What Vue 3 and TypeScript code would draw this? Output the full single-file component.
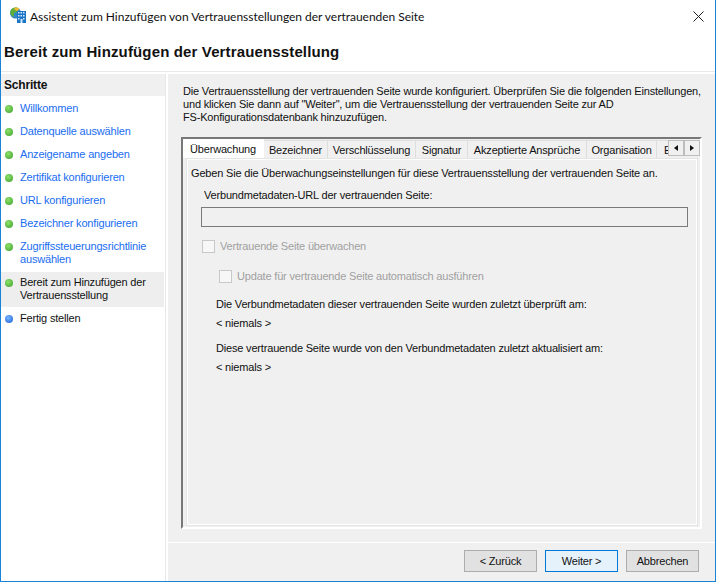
<script setup lang="ts">
interface Step { label: string; state: 'done' | 'current' | 'next' }
const steps: Step[] = [
  { label: 'Willkommen', state: 'done' },
  { label: 'Datenquelle auswählen', state: 'done' },
  { label: 'Anzeigename angeben', state: 'done' },
  { label: 'Zertifikat konfigurieren', state: 'done' },
  { label: 'URL konfigurieren', state: 'done' },
  { label: 'Bezeichner konfigurieren', state: 'done' },
  { label: 'Zugriffssteuerungsrichtlinie auswählen', state: 'done' },
  { label: 'Bereit zum Hinzufügen der Vertrauensstellung', state: 'current' },
  { label: 'Fertig stellen', state: 'next' },
]
const tabs = [
  { label: 'Bezeichner', w: 64, clip: false },
  { label: 'Verschlüsselung', w: 88, clip: false },
  { label: 'Signatur', w: 52, clip: false },
  { label: 'Akzeptierte Ansprüche', w: 119, clip: false },
  { label: 'Organisation', w: 70, clip: false },
  { label: 'Endpunkte', w: 70, clip: true },
]
</script>

<template>
  <div class="window">
    <div class="titlebar">
      <svg class="appicon" width="18" height="18" viewBox="0 0 18 18">
        <circle cx="6.500" cy="7" r="5.500" fill="#2f86c8" />
        <path d="M2 4C4 1.500 7 1 9 2L8.500 6 5 7 5 11 2.500 9.500 1 7z" fill="#5fae3a" />
        <path d="M5 1.700c2-.6 4-.2 5.500 1L8.500 5 6 4z" fill="#f2b92e" />
        <rect x="8" y="5" width="9" height="12" fill="#1c74c4" />
        <path d="M9 6h1.500v1.500H9zM11.500 6H13v1.500h-1.500zM14 6h1.500v1.500H14zM9 9h1.500v1.500H9zM11.500 9H13v1.500h-1.500zM14 9h1.500v1.500H14zM9 12h1.500v1.500H9zM14 12h1.500v1.500H14z" fill="#cfe8fb" />
        <rect x="11.500" y="13" width="2" height="4" fill="#cfe8fb" />
      </svg>
      <span class="title">Assistent zum Hinzufügen von Vertrauensstellungen der vertrauenden Seite</span>
      <svg class="close" width="11" height="11" viewBox="0 0 11 11">
        <path d="M.5.500l10 10M10.500.500l-10 10" stroke="#222" fill="none" />
      </svg>
    </div>
    <div class="heading">Bereit zum Hinzufügen der Vertrauensstellung</div>
    <div class="body">
      <aside class="sidebar">
        <div class="sidehead">Schritte</div>
        <ul class="steps">
          <li v-for="s in steps" :key="s.label" class="step" :class="s.state">
            <span class="dot"></span>
            <span class="steplabel">{{ s.label }}</span>
          </li>
        </ul>
      </aside>
      <main class="main">
        <div class="content">
          <p class="intro">Die Vertrauensstellung der vertrauenden Seite wurde konfiguriert. Überprüfen Sie die folgenden Einstellungen,<br />und klicken Sie dann auf "Weiter", um die Vertrauensstellung der vertrauenden Seite zur AD<br />FS-Konfigurationsdatenbank hinzuzufügen.</p>
          <div class="frame">
            <div class="tabstrip">
              <div class="tab active">Überwachung</div>
              <div v-for="t in tabs" :key="t.label" class="tab" :class="{ clip: t.clip }" :style="{ width: t.w + 'px' }">{{ t.label }}</div>
              <div class="scroller">
                <button class="arrow"><span class="tri left"></span></button>
                <button class="arrow"><span class="tri right"></span></button>
              </div>
            </div>
            <div class="page">
              <div class="lead">Geben Sie die Überwachungseinstellungen für diese Vertrauensstellung der vertrauenden Seite an.</div>
              <div class="urllabel">Verbundmetadaten-URL der vertrauenden Seite:</div>
              <div class="urlbox"></div>
              <label class="check first"><span class="box"></span>Vertrauende Seite überwachen</label>
              <label class="check second"><span class="box"></span>Update für vertrauende Seite automatisch ausführen</label>
              <div class="info a">Die Verbundmetadaten dieser vertrauenden Seite wurden zuletzt überprüft am:</div>
              <div class="info v">&lt; niemals &gt;</div>
              <div class="info b">Diese vertrauende Seite wurde von den Verbundmetadaten zuletzt aktualisiert am:</div>
              <div class="info v">&lt; niemals &gt;</div>
            </div>
          </div>
        </div>
        <div class="footer">
          <button class="btn">&lt; Zurück</button>
          <button class="btn primary">Weiter &gt;</button>
          <button class="btn">Abbrechen</button>
        </div>
      </main>
    </div>
  </div>
</template>

<style>
html, body { margin: 0; background: #fff; }
</style>

<style scoped>
.window {
  box-sizing: border-box;
  width: 716px;
  height: 582px;
  border: 1px solid #1883d7;
  border-top: 0;
  background: #fff;
  display: flex;
  flex-direction: column;
  font-family: "Liberation Sans", Arial, sans-serif;
  font-size: 11px;
  letter-spacing: -0.18px;
  color: #111;
  overflow: hidden;
}
.titlebar {
  height: 32px;
  display: flex;
  align-items: center;
  padding-left: 8px;
  flex: none;
}
.appicon { margin: 0 3px 2px 0; }
.title { flex: 1; font-family: Lato, sans-serif; font-size: 12px; letter-spacing: -0.03px; }
.close { margin-right: 11px; }
.heading {
  height: 40px;
  box-sizing: border-box;
  padding: 11px 0 0 3px;
  font-size: 15px;
  font-weight: 700;
  letter-spacing: 0.14px;
  flex: none;
  border-bottom: 1px solid #e8e8e8;
}
.body { flex: 1; display: flex; min-height: 0; padding-top: 2px; }
.sidebar { width: 164px; flex: none; border-right: 1px solid #e8e8e8; }
.sidehead {
  height: 22px;
  line-height: 22px;
  font-weight: 700;
  font-size: 12px;
  padding-left: 3px;
  background: #f0f0f0;
}
.steps { list-style: none; margin: 2px 0 0; padding: 0; }
.step {
  display: flex;
  padding: 4px 0 4px 4px;
  line-height: 13px;
  width: 163px;
  box-sizing: border-box;
  margin-bottom: 2px;
  color: #1a6df0;
}
.step.current { background: #eeeeee; color: #111; padding-bottom: 5px; margin-bottom: 1px; }
.step.next { color: #111; }
.steplabel { flex: 1; line-height: 13px; }
.dot {
  width: 8px;
  height: 8px;
  border-radius: 50%;
  margin: 3px 7px 0 0;
  flex: none;
  background: radial-gradient(circle at 40% 35%, #8fe06a, #3aa02c);
}
.step.next .dot { background: radial-gradient(circle at 40% 35%, #7ab6ff, #1a5fd8); }
.main {
  flex: 1;
  margin-left: 2px;
  background: #f0f0f0;
  display: flex;
  flex-direction: column;
  min-width: 0;
}
.content { flex: 1; padding: 11px 0 0 13px; display: flex; flex-direction: column; min-height: 0; }
.intro { margin: 0 0 13px 2px; line-height: 13px; white-space: nowrap; }
.frame {
  width: 521px;
  height: 392px;
  box-sizing: border-box;
  border: 2px solid #fff;
  border-top-color: #787878;
  border-left-color: #787878;
  display: flex;
  flex-direction: column;
}
.tabstrip { display: flex; height: 19px; position: relative; overflow: hidden; flex: none; align-items: flex-end; }
.tab {
  box-sizing: border-box;
  height: 18px;
  line-height: 19px;
  text-align: center;
  border: 1px solid #dedede;
  border-left: 0;
  border-bottom: 0;
  flex: none;
  white-space: nowrap;
  overflow: hidden;
}
.tab.active { width: 81px; height: 19px; background: #fff; border-color: #fff; line-height: 18px; }
.tab.clip { text-align: left; padding-left: 7px; }
.scroller { position: absolute; right: 0; top: 1px; display: flex; width: 32px; height: 16px; background: #f0f0f0; }
.arrow {
  flex: 1;
  padding: 0;
  background: #f0f0f0;
  border: 1px solid #bdbdbd;
  display: flex;
  align-items: center;
  justify-content: center;
}
.tri { width: 0; height: 0; border-top: 3px solid transparent; border-bottom: 3px solid transparent; }
.tri.left { border-right: 4px solid #111; }
.tri.right { border-left: 4px solid #111; }
.page {
  flex: 1;
  border: 2px solid #fff;
  outline: 1px solid #e4e4e4;
  outline-offset: -1px;
  margin: 0 2px 1px 3px;
  padding: 6px 0 0 3px;
}
.lead { line-height: 15px; }
.urllabel { margin: 7px 0 0 13px; line-height: 15px; }
.urlbox { width: 485px; height: 18px; border: 1px solid #7a7a7a; margin: 4px 0 0 10px; box-sizing: content-box; }
.check { display: flex; align-items: center; color: #a0a0a0; line-height: 15px; }
.box { width: 11px; height: 11px; border: 1px solid #c8c8c8; background: #f7f7f7; margin-right: 5px; flex: none; }
.check.first { margin: 12px 0 0 11px; }
.check.second { margin: 15px 0 0 28px; }
.info { line-height: 15px; margin-left: 25px; }
.info.a { margin-top: 13px; }
.info.v { margin-top: 4px; }
.info.b { margin-top: 10px; }
.footer {
  height: 39px;
  flex: none;
  border-top: 1px solid #fff;
  display: flex;
  justify-content: flex-end;
  align-items: flex-start;
  gap: 8px;
  padding: 7px 16px 0 0;
  box-sizing: border-box;
}
.btn {
  width: 73px;
  height: 22px;
  box-sizing: border-box;
  padding: 0;
  background: #e1e1e1;
  border: 1px solid #adadad;
  font: inherit;
  letter-spacing: inherit;
  color: #111;
}
.btn.primary { background: #e5f1fb; border-color: #0078d7; }
</style>
